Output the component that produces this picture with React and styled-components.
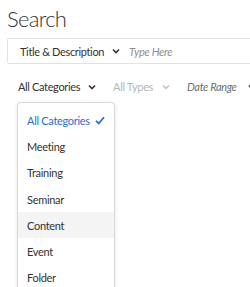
import styled, { createGlobalStyle } from 'styled-components';

const GlobalStyle = createGlobalStyle`
  body {
    margin: 0;
    background: #fff;
    font-family: 'Lato', 'Open Sans', sans-serif;
    color: #333;
  }
`;

const Page = styled.div`
  width: 250px;
  height: 287px;
  overflow: hidden;
  padding: 0 0 0 7px;
  box-sizing: border-box;
`;

const Title = styled.h1`
  margin: 0;
  padding-top: 5px;
  font-size: 22px;
  font-weight: 300;
  letter-spacing: -0.7px;
  line-height: 27px;
  color: #333;
`;

const SearchBar = styled.div`
  margin-top: 6px;
  width: 260px;
  height: 26px;
  border: 1px solid #e3e3e3;
  border-radius: 2px;
  display: flex;
  align-items: center;
  padding-left: 12px;
  box-sizing: border-box;
`;

const FieldSelect = styled.div`
  display: flex;
  align-items: center;
  gap: 8px;
  font-size: 11px;
  letter-spacing: -0.35px;
  color: #333;
  white-space: nowrap;
`;

const SearchInput = styled.span`
  margin-left: 9px;
  font-size: 11px;
  letter-spacing: -0.3px;
  font-style: italic;
  color: #8e8e8e;
  white-space: nowrap;
`;

const Filters = styled.div`
  margin-top: 16px;
  padding-left: 11px;
  display: flex;
  align-items: center;
  gap: 17px;
  white-space: nowrap;
`;

const Filter = styled.div`
  display: flex;
  align-items: center;
  gap: ${(p) => p.$gap}px;
  font-size: 11px;
  letter-spacing: -0.35px;
  font-style: ${(p) => (p.$italic ? 'italic' : 'normal')};
  color: ${(p) => p.$color};
`;

const Menu = styled.div`
  margin-top: 9px;
  margin-left: 10px;
  width: 96px;
  border: 1px solid #dadada;
  border-radius: 4px;
  box-shadow: 0 1px 4px rgba(0, 0, 0, 0.12);
  padding-top: 4px;
  background: #fff;
`;

const Item = styled.div`
  height: 26.3px;
  display: flex;
  align-items: center;
  justify-content: space-between;
  padding: 0 9px;
  font-size: 11px;
  letter-spacing: -0.3px;
  white-space: nowrap;
  color: ${(p) => (p.$selected ? '#2b6dd2' : '#333')};
  background: ${(p) => (p.$hover ? '#f4f4f4' : 'transparent')};
`;

function Chevron({ color = '#333' }) {
  return (
    <svg width="8" height="6" viewBox="0 0 8 6">
      <path d="M1 1.5 L4 4.5 L7 1.5" fill="none" stroke={color} strokeWidth="1.6" />
    </svg>
  );
}

function Check() {
  return (
    <svg width="10" height="9" viewBox="0 0 10 9">
      <path d="M1 4.8 L3.8 7.5 L9 1.2" fill="none" stroke="#2b6dd2" strokeWidth="1.8" />
    </svg>
  );
}

const items = ['All Categories', 'Meeting', 'Training', 'Seminar', 'Content', 'Event', 'Folder'];

export default function App() {
  return (
    <Page>
      <GlobalStyle />
      <Title>Search</Title>
      <SearchBar>
        <FieldSelect>
          Title &amp; Description <Chevron />
        </FieldSelect>
        <SearchInput>Type Here</SearchInput>
      </SearchBar>
      <Filters>
        <Filter $color="#333" $gap={8}>
          All Categories <Chevron />
        </Filter>
        <Filter $color="#b5b5b5" $gap={9}>
          All Types <Chevron color="#c4c4c4" />
        </Filter>
        <Filter $color="#6e6e6e" $italic $gap={11}>
          Date Range <Chevron />
        </Filter>
      </Filters>
      <Menu>
        {items.map((name, i) => (
          <Item key={name} $selected={i === 0} $hover={name === 'Content'}>
            {name}
            {i === 0 && <Check />}
          </Item>
        ))}
      </Menu>
    </Page>
  );
}
